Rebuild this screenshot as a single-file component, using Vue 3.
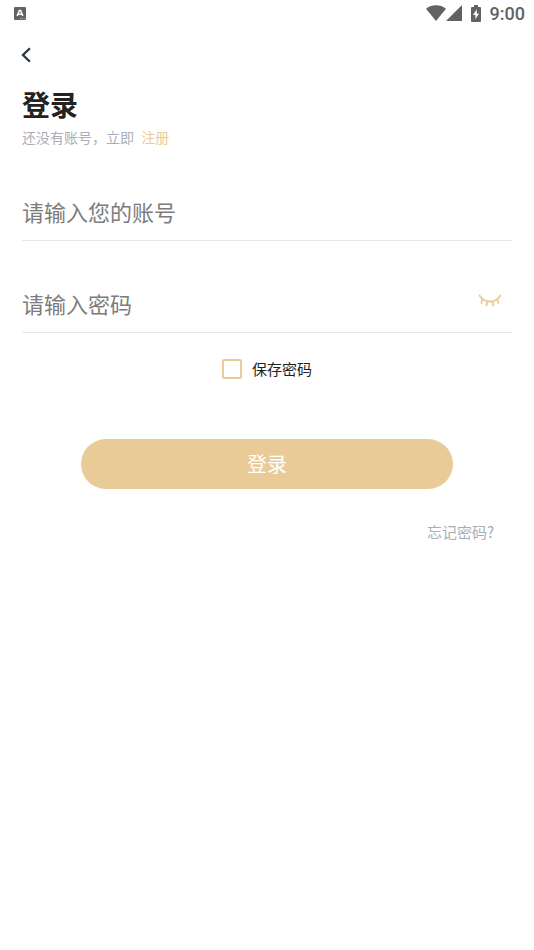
<script setup>
import { ref } from 'vue'

const account = ref('')
const password = ref('')
const remember = ref(false)
const visible = ref(false)
</script>

<template>
  <div class="screen">
    <div class="status">
      <svg class="badge" width="12" height="13" viewBox="0 0 12 13" aria-hidden="true">
        <rect width="12" height="13" rx="1" fill="#626262" />
        <path d="M3.200 9 5.300 3.600h1.400L8.800 9M4.300 7.300h3.400" fill="none" stroke="#fff" stroke-width="1.500" />
        <path d="M6 11.500h1.200M8 11.500h1M9.800 11.500h1" stroke="#ccc" stroke-width="0.800" />
      </svg>
      <div class="indicators">
        <svg width="20" height="16" viewBox="0 0 20 16" aria-hidden="true">
          <path d="M0 3.800C5.800-.8 14.200-.8 20 3.800L10 16Z" fill="#626262" />
        </svg>
        <svg class="signal" width="16" height="16" viewBox="0 0 16 16" aria-hidden="true">
          <path d="M16 0V16H0Z" fill="#626262" />
        </svg>
        <svg class="battery" width="10" height="17" viewBox="0 0 10 17" aria-hidden="true">
          <path d="M3 0h4v2h2a1 1 0 0 1 1 1v13a1 1 0 0 1-1 1H1a1 1 0 0 1-1-1V3a1 1 0 0 1 1-1h2Z" fill="#626262" />
          <path d="M5.800 4.200 2 10h2.400v4.300L8 8.500H5.800Z" fill="#fff" />
        </svg>
        <span class="time">9:00</span>
      </div>
    </div>

    <header class="nav">
      <button type="button" class="back" aria-label="返回">
        <svg width="10" height="16" viewBox="0 0 10 16" aria-hidden="true">
          <path d="M8.900 1.200 2 8l6.900 6.800" fill="none" stroke="#2b3540" stroke-width="2.300" />
        </svg>
      </button>
    </header>

    <main class="content">
      <h1>登录</h1>
      <p class="hint">还没有账号，立即 <a href="#register">注册</a></p>

      <form @submit.prevent>
        <div class="field">
          <input v-model="account" type="text" placeholder="请输入您的账号" aria-label="账号" />
        </div>
        <div class="field">
          <input v-model="password" :type="visible ? 'text' : 'password'" placeholder="请输入密码" aria-label="密码" />
          <button type="button" class="eye" aria-label="显示密码" @click="visible = !visible">
            <svg width="24" height="14" viewBox="0 0 24 14" aria-hidden="true">
              <path d="M1.500 1.500C4 5.300 7.500 7.500 12 7.500S20 5.300 22.500 1.500M4.300 4.800 3.500 9M9.200 7.300 8.500 11.500M14.500 7.300l.7 4.200M19.500 4.800l.8 4.200" fill="none" stroke="#e9cb97" stroke-width="1.800" stroke-linecap="round" />
            </svg>
          </button>
        </div>
        <label class="remember">
          <input v-model="remember" type="checkbox" />
          <span>保存密码</span>
        </label>
        <button type="submit" class="submit">登录</button>
      </form>
      <a class="forgot" href="#forgot">忘记密码?</a>
    </main>
  </div>
</template>

<style>
body {
  background: #fff;
}
</style>

<style scoped>
.screen {
  min-height: 100vh;
  background: #fff;
  font-family: "Noto Sans CJK SC", sans-serif;
  font-weight: 400;
}

button {
  padding: 0;
  border: 0;
  background: none;
  font-family: inherit;
  font-weight: inherit;
  cursor: pointer;
}

a {
  text-decoration: none;
}

svg {
  display: block;
}

.status {
  display: flex;
  align-items: center;
  justify-content: space-between;
  height: 27px;
  padding: 0 9px 0 14px;
}

.indicators {
  display: flex;
  align-items: center;
}

.indicators svg {
  margin-bottom: 1px;
}

.indicators .battery {
  margin: 0 9px 1px;
}

.time {
  color: #626262;
  font: 500 18px/28px Roboto, sans-serif;
}

.nav {
  display: flex;
  align-items: center;
  height: 55px;
  padding: 0 21px;
}

.back {
  display: block;
}

.content {
  display: flex;
  flex-direction: column;
  padding: 0 22px;
}

h1 {
  margin: 0;
  color: #222;
  font-size: 28px;
  font-weight: 700;
  line-height: 44px;
}

.hint {
  margin: 0;
  color: #a9aeb5;
  font-size: 14px;
  line-height: 22px;
}

.hint a {
  margin-left: 4px;
  color: #e9cb97;
}

form {
  display: flex;
  flex-direction: column;
  padding-top: 24px;
}

.field {
  display: flex;
  align-items: flex-end;
  height: 68px;
  margin-bottom: 23px;
  border-bottom: 1px solid #e8e8e8;
}

.field input {
  flex: 1;
  min-width: 0;
  height: 58px;
  padding: 0;
  border: 0;
  outline: 0;
  background: none;
  color: #222;
  font-family: inherit;
  font-size: 22px;
  font-weight: inherit;
}

.field input::placeholder {
  color: #7c7c7c;
  opacity: 1;
}

.eye {
  margin: 0 10px 24px;
}

.remember {
  display: flex;
  align-items: center;
  align-self: center;
  gap: 10px;
  color: #222;
  font-size: 15px;
  line-height: 26px;
}

.remember input {
  appearance: none;
  width: 20px;
  height: 20px;
  margin: 0;
  border: 2px solid #e9cb97;
  border-radius: 2px;
}

.remember input:checked {
  background: #e9cb97;
}

.submit {
  height: 50px;
  margin: 57px 59px 0;
  padding-bottom: 2px;
  border-radius: 25px;
  background: #e9cb97;
  color: #fff;
  font-size: 20px;
}

.forgot {
  align-self: flex-end;
  margin: 31px 18px 0;
  color: #a9aeb5;
  font-size: 15px;
  line-height: 24px;
}
</style>
